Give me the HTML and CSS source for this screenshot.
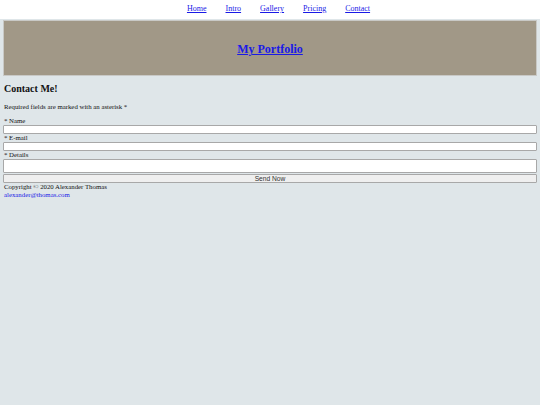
FILE: index.html
```html
<!DOCTYPE html>
<html lang="en">
<head>
<meta charset="utf-8">
<title>My Portfolio</title>
<link rel="stylesheet" href="styles.css">
</head>
<body>
<nav class="topnav">
  <ul class="topnav-list">
    <li><a href="#">Home</a></li>
    <li><a href="#">Intro</a></li>
    <li><a href="#">Gallery</a></li>
    <li><a href="#">Pricing</a></li>
    <li><a href="#">Contact</a></li>
  </ul>
</nav>
<header class="banner">
  <h1 class="banner-title"><a href="#">My Portfolio</a></h1>
</header>
<main class="content">
  <h2 class="section-title">Contact Me!</h2>
  <p class="note">Required fields are marked with an asterisk *</p>
  <form class="contact-form">
    <label class="field-label" for="name">* Name</label>
    <input class="field-input" id="name" type="text">
    <label class="field-label" for="email">* E-mail</label>
    <input class="field-input" id="email" type="email">
    <label class="field-label" for="details">* Details</label>
    <textarea class="field-area" id="details"></textarea>
    <button class="send-btn" type="button">Send Now</button>
  </form>
  <footer class="footer">
    <div>Copyright © 2020 Alexander Thomas</div>
    <a href="#">alexander@thomas.com</a>
  </footer>
</main>
</body>
</html>
```

FILE: styles.css
```css
html, body {
  margin: 0;
  padding: 0;
  background: #dfe6e9;
  font-family: "Liberation Serif", "Times New Roman", serif;
  color: #111;
}
a { color: #1a1ae6; text-decoration: underline; }

.topnav {
  background: #fff;
  height: 19px;
  box-sizing: border-box;
  padding-top: 4px;
}
.topnav-list {
  list-style: none;
  margin: 0;
  padding: 0 0 0 17px;
  display: flex;
  justify-content: center;
  gap: 19px;
  font-size: 8px;
  line-height: 9px;
}

.banner {
  margin: 1px 3px 0;
  height: 56px;
  box-sizing: border-box;
  border: 1px solid #c9c9c6;
  background: #a19887;
  display: flex;
  align-items: center;
  justify-content: center;
  padding-top: 2px;
}
.banner-title {
  margin: 0;
  font-size: 12px;
  line-height: 14px;
  font-weight: bold;
}

.content {
  padding: 0 3px;
}
.section-title {
  margin: 7px 0 0 1px;
  font-size: 10px;
  line-height: 12px;
  font-weight: bold;
}
.note {
  margin: 8px 0 0 1px;
  font-size: 6.8px;
  line-height: 8px;
}
.contact-form {
  margin-top: 6px;
  display: flex;
  flex-direction: column;
}
.field-label {
  font-size: 6.8px;
  line-height: 8px;
  padding-left: 1px;
}
.field-input, .field-area {
  box-sizing: border-box;
  width: 100%;
  margin: 0;
  padding: 0 2px;
  border: 1px solid #a8a8a8;
  border-radius: 1px;
  background: #fff;
  font-size: 6.67px;
  font-family: "Liberation Sans", Arial, sans-serif;
}
.field-input { height: 9px; }
.field-area { height: 14px; resize: none; display: block; }
.send-btn {
  box-sizing: border-box;
  width: 100%;
  height: 9px;
  margin: 1px 0 0;
  padding: 0;
  border: 1px solid #a8a8a8;
  border-radius: 1px;
  background: #efefef;
  font-family: "Liberation Sans", Arial, sans-serif;
  font-size: 6.67px;
  line-height: 7px;
  color: #333;
}
.footer {
  font-size: 6.8px;
  line-height: 7.5px;
  padding-left: 1px;
}
```
